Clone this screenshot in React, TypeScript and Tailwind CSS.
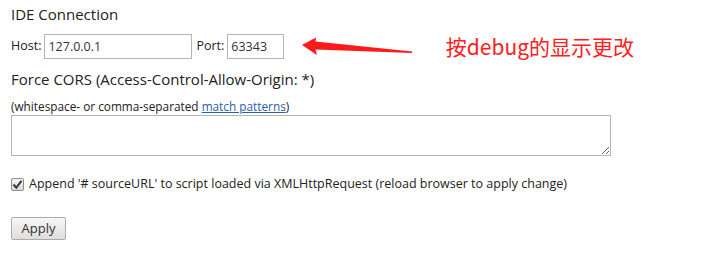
import React from "react";

export default function App() {
  return (
    <div
      className="relative w-[701px] h-[260px] bg-white pl-[11px] text-[#222]"
      style={{ fontFamily: '"Open Sans", "Noto Sans CJK SC", sans-serif' }}
    >
      <div className="h-[34px] text-[15px] leading-[28px] text-[#222]">IDE Connection</div>
      <div className="flex h-[25px] items-center text-[12.5px]">
        <span>Host:</span>
        <input
          readOnly
          value="127.0.0.1"
          className="ml-[3px] h-[25px] w-[148px] border border-[#b4b4b4] px-[3px] text-[12.5px] text-[#333] outline-none"
          style={{ fontFamily: '"Open Sans", sans-serif' }}
        />
        <span className="ml-[4px]">Port:</span>
        <input
          readOnly
          value="63343"
          className="ml-[3px] h-[25px] w-[57px] border border-[#b4b4b4] px-[3px] text-[12.5px] text-[#333] outline-none"
          style={{ fontFamily: '"Open Sans", sans-serif' }}
        />
        <div className="ml-auto mr-[67px] text-[21px] leading-[25px] text-[#ff2020]" style={{ fontFamily: '"Noto Sans CJK SC", sans-serif' }}>
          按debug的显示更改
        </div>
      </div>
      <div className="mt-[10px] text-[15px] leading-[20px]">Force CORS (Access-Control-Allow-Origin: *)</div>
      <div className="mt-[9px] text-[11.8px] leading-[16px]">
        (whitespace- or comma-separated{" "}
        <a href="#" className="text-[#2a5db0] underline">match patterns</a>)
      </div>
      <textarea
        readOnly
        className="mt-[1px] block h-[41px] w-[600px] border border-[#b4b4b4] outline-none"
      />
      <div className="mt-[19px] flex h-[18px] items-center text-[12.5px]">
        <span className="flex h-[13px] w-[13px] items-center justify-center rounded-[2px] border border-[#8e8e8e] bg-gradient-to-b from-[#f4f4f4] to-[#dcdcdc]">
          <svg width="11" height="11" viewBox="0 0 11 11">
            <path d="M1.5 5.5 L4.3 8.6 L9.5 1.8" fill="none" stroke="#3a3a3a" strokeWidth="2" />
          </svg>
        </span>
        <span className="ml-[5px]">Append '# sourceURL' to script loaded via XMLHttpRequest (reload browser to apply change)</span>
      </div>
      <button className="mt-[24px] h-[23px] w-[55px] rounded-[2px] border border-[#acacac] bg-gradient-to-b from-[#f6f6f6] to-[#dedede] text-[13px] text-[#333]">
        Apply
      </button>
      <svg className="absolute left-0 top-0" width="701" height="260" style={{ pointerEvents: "none" }}>
        <polygon
          points="302,45 316,37.5 315.5,41.5 412,51.5 412,53 315.5,49.5 317,55"
          fill="#ff1a1a"
        />
      </svg>
    </div>
  );
}
